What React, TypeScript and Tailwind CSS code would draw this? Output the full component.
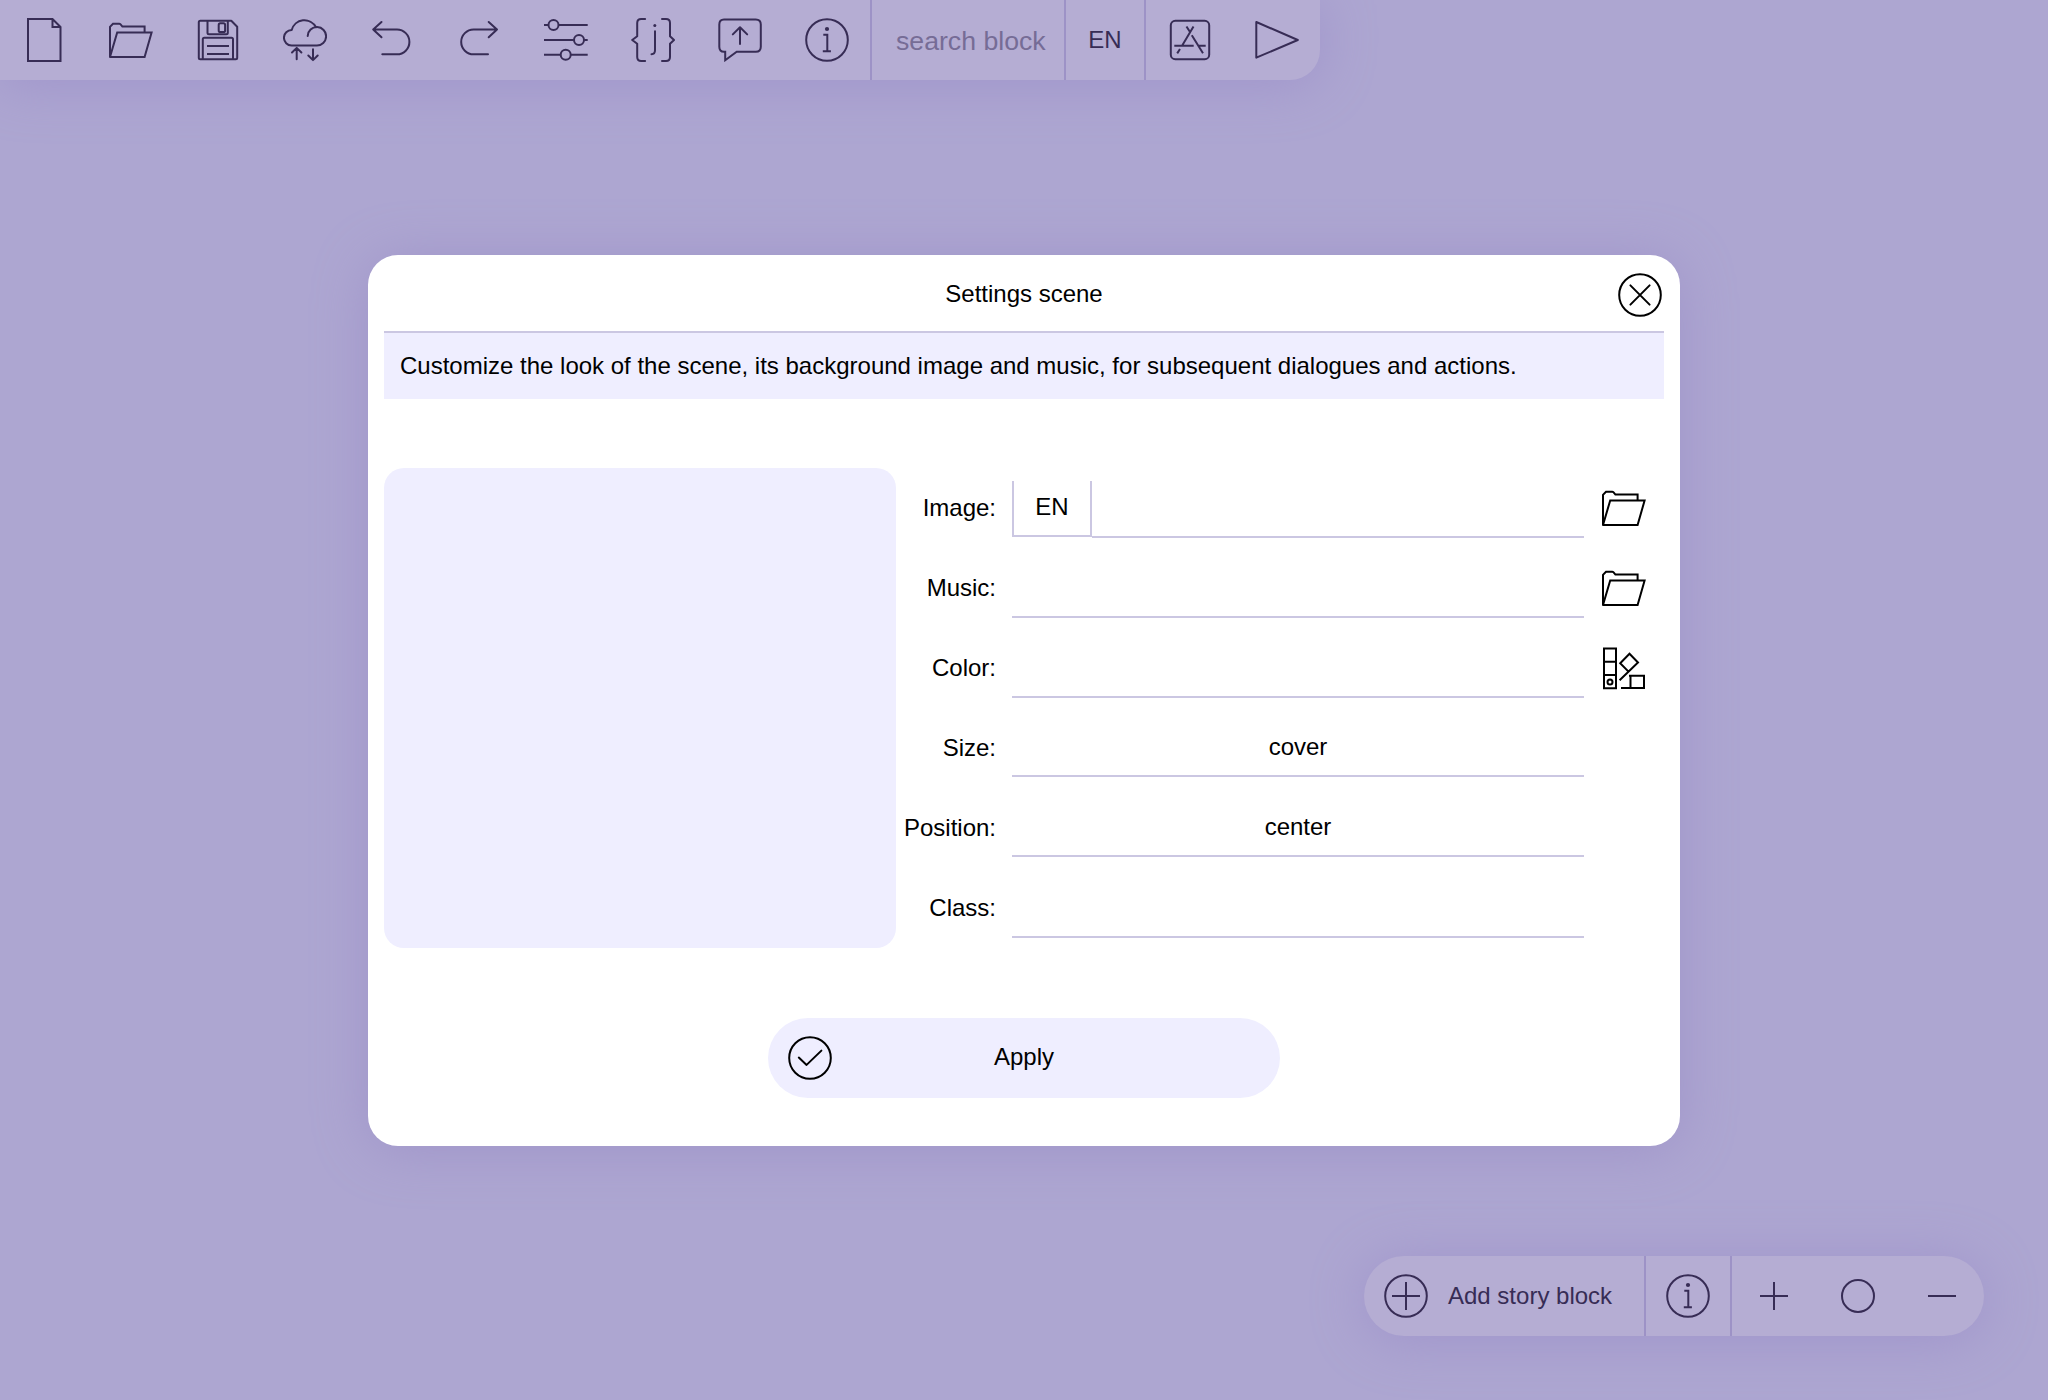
import type { ReactNode } from "react";

function Icon({ children }: { children: ReactNode }) {
  return (
    <svg
      className="block size-11 shrink-0"
      viewBox="0 0 44 44"
      fill="none"
      stroke="currentColor"
      strokeWidth="2"
      strokeLinejoin="round"
      strokeLinecap="round"
    >
      {children}
    </svg>
  );
}

const FileIcon = () => (
  <Icon>
    <path strokeLinejoin="miter" d="M6 1H30.5L38.5 9V43H6ZM30.5 1V9H38.5" />
  </Icon>
);
const FolderIcon = () => (
  <Icon>
    <path strokeLinejoin="miter" d="M35.6 14.5V8.6H13.4L11.6 6.4Q11 5.8 10.2 5.8H4L1 8.8V39L8.2 14.5H42.6L35.6 39H1" />
  </Icon>
);
const SaveIcon = () => (
  <Icon>
    <path d="M4.2 2.8H35.3L41.2 8.7V39.7Q41.2 41.2 39.7 41.2H4.3Q2.8 41.2 2.8 39.7V4.3Q2.8 2.8 4.3 2.8Z" />
    <path d="M11.5 3V14.7Q11.5 16.2 13 16.2H30.3Q31.8 16.2 31.8 14.7V3" />
    <rect x="22.7" y="5.3" width="6.4" height="8.7" rx="1.6" />
    <path d="M6.8 41V21.3Q6.8 19.8 8.3 19.8H35.5Q37 19.8 37 21.3V41" />
    <path strokeLinecap="butt" d="M11 28H33M11 36H33" />
  </Icon>
);
const CloudIcon = () => (
  <Icon>
    <path d="M24.7 18A9.2 9.2 0 1 1 33.7 27.5H8.6A7.7 7.7 0 1 1 8.7 12.1A13.1 13.1 0 0 1 33 9.3" />
    <path d="M13.7 41.3V30M9 34.5L13.7 29.9L18.4 34.5M30 31.2V42M25.3 37.5L30 42.1L34.7 37.5" />
  </Icon>
);
const UndoIcon = () => (
  <Icon>
    <path d="M12.3 36.3H27A12.4 12.4 0 0 0 27 11.5H3.2M11.5 4L3.2 11.5L11.5 19.3" />
  </Icon>
);
const RedoIcon = () => (
  <Icon>
    <path d="M31 36.3H16.6A12.4 12.4 0 0 1 16.6 11.5H40M31.7 4L40 11.5L31.7 19.3" />
  </Icon>
);
const SlidersIcon = () => (
  <Icon>
    <path strokeLinecap="butt" d="M0 7H4.1M14.5 7H43.7M0 22H29.8M40.2 22H43.7M0 36.8H16.5M26.9 36.8H43.7" />
    <circle cx="9.5" cy="7" r="5" />
    <circle cx="35" cy="22" r="5" />
    <circle cx="21.7" cy="36.8" r="5" />
  </Icon>
);
const JsonIcon = () => (
  <Icon>
    <path d="M14.1 1H10.2Q6.2 1 6.2 5V18.2L1.2 22L6.2 25.8V39Q6.2 43 10.2 43H14.1" />
    <path d="M31 1H35Q39 1 39 5V18.2L43 22L39 25.8V39Q39 43 35 43H31" />
    <path d="M24 13.2V32.3Q24 36.2 20.5 36.2" />
    <circle cx="23.8" cy="7.4" r="1.5" fill="currentColor" stroke="none" />
  </Icon>
);
const FeedbackIcon = () => (
  <Icon>
    <path strokeLinejoin="miter" d="M6 1.4H37.8Q42.8 1.4 42.8 6.4V28.7Q42.8 33.7 37.8 33.7H18.7L7.2 42.2V33.7H6Q1.3 33.7 1.3 28.7V6.4Q1.3 1.4 6 1.4Z" />
    <path d="M22 26V9.2M14.8 16.4L22 9.2L29.2 16.4" />
  </Icon>
);
const InfoIcon = () => (
  <Icon>
    <circle cx="22" cy="22" r="20.8" />
    <circle cx="22" cy="11" r="2.1" fill="currentColor" stroke="none" />
    <path strokeLinecap="butt" strokeLinejoin="miter" d="M18.3 16.8H22.3V33.2M17.8 33.2H25.9" />
  </Icon>
);
const AppIcon = () => (
  <Icon>
    <rect x="2.8" y="2.8" width="38.4" height="38.4" rx="4.5" />
    <path strokeLinecap="butt" d="M25.5 8.5L14.2 27.5M18.5 8.5L22.2 14.2M23.8 17.2L35 35.2M6.3 27.7H25.7M29.7 27.7H37.7M12 31L9.2 35.4" />
  </Icon>
);
const PlayIcon = () => (
  <Icon>
    <path d="M1.3 4L42.8 22L1.3 39.7Z" />
  </Icon>
);
const CloseIcon = () => (
  <Icon>
    <circle cx="22" cy="22" r="20.8" />
    <path d="M12.4 12.4L31.6 31.6M31.6 12.4L12.4 31.6" />
  </Icon>
);
const PaletteIcon = () => (
  <Icon>
    <path strokeLinejoin="miter" strokeLinecap="butt" d="M2 2.6H14V42.2H2ZM2 15.7H14M2 28.9H14" />
    <circle cx="8" cy="36" r="2.5" />
    <path strokeLinejoin="miter" strokeLinecap="butt" d="M17.6 34.2L36 16.5L27.5 7.7L18.2 17.3L26.5 25.6" />
    <path strokeLinejoin="miter" strokeLinecap="butt" d="M19 42H42V29.8H27M28.5 29.8V42" />
  </Icon>
);
const CheckIcon = () => (
  <Icon>
    <circle cx="22" cy="22" r="20.8" />
    <path d="M10.8 21.6L18.6 28.9L33.4 14.6" />
  </Icon>
);
const AddCircleIcon = () => (
  <Icon>
    <circle cx="22" cy="22" r="20.8" />
    <path strokeLinecap="butt" d="M8 22H36M22 8V36" />
  </Icon>
);
const PlusIcon = () => (
  <Icon>
    <path strokeLinecap="butt" d="M8 22H36M22 8V36" />
  </Icon>
);
const ResetIcon = () => (
  <Icon>
    <circle cx="22" cy="22" r="16" />
  </Icon>
);
const MinusIcon = () => (
  <Icon>
    <path strokeLinecap="butt" d="M8 22H36" />
  </Icon>
);

const tools = [
  FileIcon, FolderIcon, SaveIcon, CloudIcon, UndoIcon,
  RedoIcon, SlidersIcon, JsonIcon, FeedbackIcon, InfoIcon,
];

const fields = [
  { label: "Image:", lang: "EN", value: "", action: <FolderIcon /> },
  { label: "Music:", value: "", action: <FolderIcon /> },
  { label: "Color:", value: "", action: <PaletteIcon /> },
  { label: "Size:", value: "cover" },
  { label: "Position:", value: "center" },
  { label: "Class:", value: "" },
];

function Toolbar() {
  return (
    <header className="flex h-20 w-[1320px] items-center rounded-br-[30px] bg-[#b5add3] shadow-[0_4px_54px_#9f94cb]">
      <div className="flex w-[870px] gap-[43px] pl-[22px]">
        {tools.map((Tool, i) => (
          <button key={i}>
            <Tool />
          </button>
        ))}
      </div>
      <div className="flex h-full w-[196px] items-center border-x-2 border-[#9d92c6] pt-0.5 pl-6 text-[26.67px] whitespace-nowrap text-[#766c96]">
        search block
      </div>
      <div className="flex h-full w-20 items-center justify-center border-r-2 border-[#9d92c6]">EN</div>
      <div className="flex gap-[43px] pl-[22px]">
        <button><AppIcon /></button>
        <button><PlayIcon /></button>
      </div>
    </header>
  );
}

function SettingsDialog() {
  return (
    <section className="mx-auto mt-[175px] h-[891px] w-[1312px] rounded-[30px] bg-white px-4 text-black shadow-[0_4px_54px_#9f94c9]">
      <div className="flex h-[76px] items-center">
        <h1 className="flex-1 pt-0.5 pl-[46px] text-center">Settings scene</h1>
        <button className="mt-1 mr-0.5"><CloseIcon /></button>
      </div>
      <p className="flex h-[68px] items-center border-t-2 border-[#cbc7e2] bg-[#efeeff] px-4">
        Customize the look of the scene, its background image and music, for subsequent dialogues and actions.
      </p>
      <div className="mt-[69px] flex">
        <div className="h-[480px] w-[512px] rounded-[20px] bg-[#efeeff]" />
        <div className="flex flex-1 flex-col">
          {fields.map((f) => (
            <div key={f.label} className="flex h-20 items-center">
              <label className="w-[100px] text-right whitespace-nowrap">{f.label}</label>
              <div className={`ml-4 flex h-[57px] w-[572px] items-start ${f.value ? "mt-px" : "mt-[3px]"}`}>
                {f.lang && (
                  <div className="flex h-14 w-20 items-center justify-center border-x-2 border-b-2 border-[#cbc7e2] pb-0.5">
                    {f.lang}
                  </div>
                )}
                <div className="flex h-full flex-1 items-center justify-center border-b-2 border-[#cbc7e2] pb-0.5">
                  {f.value}
                </div>
              </div>
              <div className="ml-[18px] w-[62px]">{f.action}</div>
            </div>
          ))}
        </div>
      </div>
      <button className="mx-auto mt-[70px] flex h-20 w-[512px] items-center rounded-full bg-[#efeeff] pr-16 pl-5">
        <CheckIcon />
        <span className="flex-1 pb-0.5 text-center">Apply</span>
      </button>
    </section>
  );
}

function StoryBar() {
  return (
    <footer className="mt-[110px] ml-[1364px] flex h-20 w-[620px] items-center rounded-full bg-[#b5add3] shadow-[0_4px_54px_#9f94cb]">
      <button className="flex h-full w-[282px] items-center gap-5 border-r-2 border-[#9d92c6] pl-5 whitespace-nowrap">
        <AddCircleIcon />
        Add story block
      </button>
      <button className="flex h-full w-[86px] items-center border-r-2 border-[#9d92c6] pl-5">
        <InfoIcon />
      </button>
      <div className="flex gap-10 pl-5">
        <button><PlusIcon /></button>
        <button><ResetIcon /></button>
        <button><MinusIcon /></button>
      </div>
    </footer>
  );
}

export default function App() {
  return (
    <main className="h-[1400px] w-[2048px] overflow-hidden bg-[#ada6d1] font-['Liberation_Sans',Arial,sans-serif] text-[24px] leading-7 text-[#372c55]">
      <Toolbar />
      <SettingsDialog />
      <StoryBar />
    </main>
  );
}
